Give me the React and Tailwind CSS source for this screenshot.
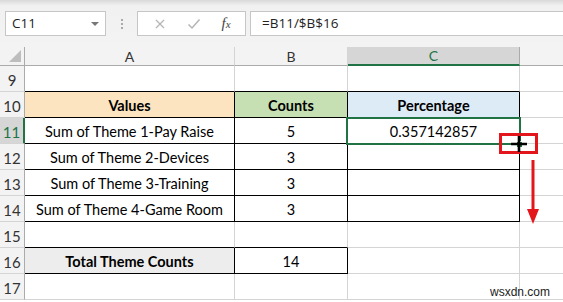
import React from "react";

const rows = [
  { n: 9, cells: [{ b: "gray-bb" }, { b: "gray-bb" }, { b: "gray-bb" }] },
  {
    n: 10,
    cells: [
      { t: "Values", bold: true, bg: "bg-[#fce4c0]", b: "black" },
      { t: "Counts", bold: true, bg: "bg-[#c6e0b4]", b: "black" },
      { t: "Percentage", bold: true, bg: "bg-[#ddebf7]", b: "black" },
    ],
  },
  {
    n: 11,
    sel: true,
    cells: [
      { t: "Sum of Theme 1-Pay Raise", b: "black" },
      { t: "5", b: "black" },
      { t: "0.357142857", b: "black" },
    ],
  },
  {
    n: 12,
    cells: [
      { t: "Sum of Theme 2-Devices", b: "black" },
      { t: "3", b: "black" },
      { b: "black" },
    ],
  },
  {
    n: 13,
    cells: [
      { t: "Sum of Theme 3-Training", b: "black" },
      { t: "3", b: "black" },
      { b: "black" },
    ],
  },
  {
    n: 14,
    cells: [
      { t: "Sum of Theme 4-Game Room", b: "black" },
      { t: "3", b: "black" },
      { b: "black" },
    ],
  },
  { n: 15, cells: [{ b: "gray-bb" }, { b: "gray-bb" }, {}] },
  {
    n: 16,
    cells: [
      { t: "Total Theme Counts", bold: true, bg: "bg-[#ededed]", b: "black" },
      { t: "14", b: "black" },
      {},
    ],
  },
  { n: 17, cells: [{}, {}, {}] },
];

const widths = ["w-[210px]", "w-[113px]", "w-[172px]"];

function borderClass(b) {
  if (b === "black") return "border-r border-b border-r-black border-b-black";
  if (b === "gray-bb") return "border-r border-b border-r-[#d4d4d4] border-b-black";
  return "border-r border-b border-[#d4d4d4]";
}

function Cell({ c, w }) {
  return (
    <div
      className={`${w} h-full shrink-0 flex items-center justify-center pt-[3px] text-[14.5px] text-black ${
        c.bold ? "font-bold" : ""
      } ${c.bg || "bg-white"} ${borderClass(c.b)}`}
    >
      {c.t}
    </div>
  );
}

export default function App() {
  return (
    <div
      className="w-[563px] h-[302px] overflow-hidden bg-white"
      style={{ fontFamily: "Lato, 'Liberation Sans', sans-serif" }}
    >
      {/* formula bar */}
      <div className="h-[47px] bg-gradient-to-b from-[#d9d9d9] via-[#f1f1f1] via-[12%] to-[#f3f3f3] flex items-center pl-[5px]">
        <div className="w-[101px] h-[25px] bg-white border border-[#c6c6c6] flex items-center pl-[6px] pr-[6px] text-[13.5px] text-[#222]">
          <span className="flex-1" style={{ fontFamily: "'Open Sans', sans-serif" }}>
            C11
          </span>
          <span className="w-0 h-0 border-l-[4px] border-r-[4px] border-t-[4px] border-l-transparent border-r-transparent border-t-[#777]" />
        </div>
        <div className="w-[31px] flex flex-col items-center gap-[2px]">
          <span className="w-[2px] h-[2px] bg-[#aaa]" />
          <span className="w-[2px] h-[2px] bg-[#aaa]" />
          <span className="w-[2px] h-[2px] bg-[#aaa]" />
        </div>
        <div className="w-[109px] h-[25px] bg-white border border-[#c6c6c6] flex items-center justify-around pl-[6px] pr-[4px]">
          <svg width="12" height="12" viewBox="0 0 12 12">
            <path d="M2 2 L10 10 M10 2 L2 10" stroke="#b5b5b5" strokeWidth="1.3" />
          </svg>
          <svg width="14" height="12" viewBox="0 0 14 12">
            <path d="M1.5 6.5 L5 10 L12.5 1.5" stroke="#b5b5b5" strokeWidth="1.5" fill="none" />
          </svg>
          <span
            className="italic text-[15px] text-[#444]"
            style={{ fontFamily: "'Liberation Serif', serif" }}
          >
            f<span className="text-[11px]">x</span>
          </span>
        </div>
        <div
          className="ml-[4px] flex-1 h-[25px] bg-white border border-[#c6c6c6] border-r-0 flex items-center pl-[11px] text-[13.5px] text-[#222]"
          style={{ fontFamily: "'Open Sans', sans-serif" }}
        >
          =B11/$B$16
        </div>
      </div>

      {/* column headers */}
      <div className="h-[19px] flex bg-[#f3f3f3] text-[14px] text-[#333]">
        <div className="w-[25px] h-full shrink-0 border-r border-b border-[#ababab] flex items-end justify-end pr-[3px] pb-[3px]">
          <svg width="12" height="12" viewBox="0 0 12 12">
            <path d="M12 0 L12 12 L0 12 Z" fill="#bdbdbd" />
          </svg>
        </div>
        <div className="w-[210px] shrink-0 border-r border-b border-r-[#d4d4d4] border-b-[#ababab] flex items-center justify-center">
          A
        </div>
        <div className="w-[113px] shrink-0 border-r border-b border-r-[#d4d4d4] border-b-[#ababab] flex items-center justify-center">
          B
        </div>
        <div className="w-[172px] shrink-0 bg-[#d6d6d6] border-r border-r-[#ababab] border-b-2 border-b-[#217346] flex items-center justify-center text-[#217346]">
          C
        </div>
        <div className="flex-1 border-b border-[#ababab]" />
      </div>

      {/* sheet body */}
      <div className="relative">
        {rows.map((r) => (
          <div key={r.n} className="h-[26px] flex">
            <div
              className={`w-[25px] h-full shrink-0 flex items-center justify-center pt-[4px] text-[15px] border-b border-[#d4d4d4] ${
                r.sel
                  ? "bg-[#d6d6d6] text-[#217346] border-r-2 border-r-[#217346]"
                  : "bg-[#f3f3f3] text-[#333] border-r border-r-[#ababab]"
              }`}
            >
              {r.n}
            </div>
            {r.cells.map((c, i) => (
              <Cell key={i} c={c} w={widths[i]} />
            ))}
            <div className="flex-1 h-full border-b border-[#d4d4d4]" />
          </div>
        ))}

        {/* active cell */}
        <div className="absolute left-[346px] top-[51px] w-[175px] h-[28px] border-2 border-[#217346]" />
        <div className="absolute left-[516px] top-[75px] w-[7px] h-[7px] bg-[#217346] border border-white" />

        {/* red callout */}
        <div className="absolute left-[499px] top-[67px] w-[39px] h-[21px] border-[3px] border-[#e3161b]" />
        <svg className="absolute left-[510px] top-[69px]" width="18" height="18" viewBox="0 0 18 18">
          <path d="M9 1 V17 M1 9 H17" stroke="#000" strokeWidth="2.6" />
        </svg>
        <svg className="absolute left-[526px] top-[94px]" width="14" height="66" viewBox="0 0 14 66">
          <path d="M7 0 V52" stroke="#e3161b" strokeWidth="3" />
          <path d="M1 49 L13 49 L7 64 Z" fill="#e3161b" />
        </svg>

        <div
          className="absolute left-[490px] top-[217px] text-[12px] text-[#222]"
          style={{ fontFamily: "'Liberation Sans', sans-serif" }}
        >
          wsxdn.com
        </div>
      </div>
    </div>
  );
}
